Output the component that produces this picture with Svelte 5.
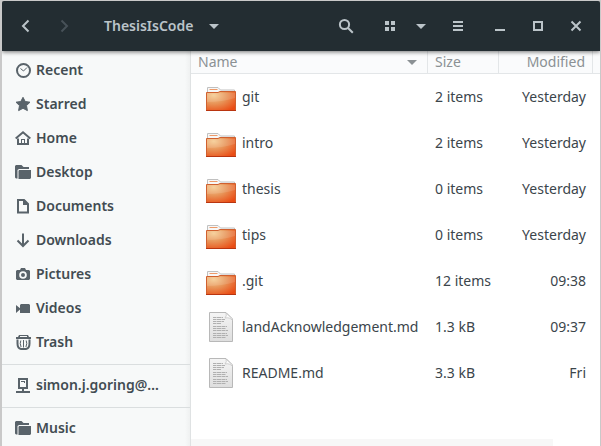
<script>
  const groups = [
    [
      ['Recent', 'recent'],
      ['Starred', 'star'],
      ['Home', 'home'],
      ['Desktop', 'folder'],
      ['Documents', 'document'],
      ['Downloads', 'download'],
      ['Pictures', 'camera'],
      ['Videos', 'video'],
      ['Trash', 'trash']
    ],
    [['simon.j.goring@…', 'server']],
    [['Music', 'folder']]
  ];

  const files = [
    { name: 'git', size: '2 items', modified: 'Yesterday', folder: true },
    { name: 'intro', size: '2 items', modified: 'Yesterday', folder: true },
    { name: 'thesis', size: '0 items', modified: 'Yesterday', folder: true },
    { name: 'tips', size: '0 items', modified: 'Yesterday', folder: true },
    { name: '.git', size: '12 items', modified: '09:38', folder: true },
    { name: 'landAcknowledgement.md', size: '1.3 kB', modified: '09:37', folder: false },
    { name: 'README.md', size: '3.3 kB', modified: 'Fri', folder: false }
  ];
</script>

{#snippet caret()}
  <svg class="caret" width="10" height="5" viewBox="0 0 10 5" aria-hidden="true"><path d="M0 0h10L5 5z" /></svg>
{/snippet}

{#snippet placeIcon(kind)}
  <svg class="place-icon" width="16" height="16" viewBox="0 0 16 16" aria-hidden="true">
    {#if kind === 'recent'}
      <circle class="line" cx="8.500" cy="8.500" r="6.500" />
      <path class="thin" d="M5.500 6.500l3 2.500L12 5.500" />
    {:else if kind === 'star'}
      <path d="M8 1.300l2.200 4.200 4.800.700-3.500 3.400.9 5L8 12.300l-4.400 2.300.9-5L1 6.200l4.800-.7z" stroke="currentColor" stroke-linejoin="round" stroke-width="1" />
    {:else if kind === 'home'}
      <path class="line" d="M.7 8.500L8 2.300l7.300 6.200" />
      <path d="M2 8.500h2V13h2V9h4v4h2V8.500h2V15H2z" />
      <path d="M7 10h2v3H7z" fill="#f7f9f9" />
    {:else if kind === 'folder'}
      <path d="M1 1h5.500l2 2H14v2H4L2.500 6v8.500H1l-1-1V2z" />
      <path d="M4 6h12v8l-1 1H3.500V7z" />
    {:else if kind === 'document'}
      <path class="line" d="M3 2h6l4 4v8.500H3z" />
      <path d="M8 2h2l3 4v1H8z" />
    {:else if kind === 'download'}
      <path class="line" d="M8 1.500V14M2.500 8.500L8 14l5.500-5.500" />
    {:else if kind === 'camera'}
      <path fill-rule="evenodd" d="M2 4h3l1-2h4l1 2h3l1 1v8l-1 1H2l-1-1V5zM8 5.200a3.800 3.800 0 1 0 0 7.600 3.800 3.800 0 0 0 0-7.600zM8 7a2 2 0 1 1 0 4 2 2 0 0 1 0-4z" />
    {:else if kind === 'video'}
      <path d="M6 4h8l1 1v8H5V9.500L1 13V5l4 3.200V5z" />
    {:else if kind === 'trash'}
      <path d="M4 1h9l1 2h2v2H1V3h2zM5 2v1h7V2z" fill-rule="evenodd" />
      <path class="line" d="M2.500 5.500v4q0 5 3.500 5.500h5q3.500-.5 3.500-5.500v-4" />
      <path class="thin" d="M5.800 6.500q-1.300 3 .3 6.500M8.500 6v7.500M11.200 6.500q1.300 3-.3 6.500" />
    {:else if kind === 'server'}
      <path class="line" d="M4 2h8v9H4z" />
      <path d="M6 4h4v1H6zM9 4h1v2H9zM7 11h2v3H7zM1 14h14v2H1z" />
    {/if}
  </svg>
{/snippet}

<div class="window">
  <header>
    <button class="tool" aria-label="Back">
      <svg width="16" height="16" viewBox="0 0 16 16"><path class="line" d="M10.500 2.500L5 8l5.500 5.500" /></svg>
    </button>
    <button class="tool" aria-label="Forward" disabled>
      <svg width="16" height="16" viewBox="0 0 16 16"><path class="line" d="M5.500 2.500L11 8l-5.500 5.500" /></svg>
    </button>
    <button class="path">ThesisIsCode {@render caret()}</button>
    <div class="tools">
      <button class="tool" aria-label="Search">
        <svg width="16" height="16" viewBox="0 0 16 16"><circle class="line" cx="6.500" cy="6.500" r="4.600" /><path class="line" d="M10 10l4.800 4.800" /></svg>
      </button>
      <div class="views">
        <button class="tool" aria-label="Grid view">
          <svg width="16" height="16" viewBox="0 0 16 16"><path d="M3 3h4v4H3zM9 3h4v4H9zM3 9h4v4H3zM9 9h4v4H9z" /></svg>
        </button>
        <button class="narrow" aria-label="View options">{@render caret()}</button>
      </div>
      <button class="tool" aria-label="Menu">
        <svg width="16" height="16" viewBox="0 0 16 16"><path d="M3 3h10v2H3zM3 7h10v2H3zM3 11h10v2H3z" /></svg>
      </button>
      <div class="controls">
        <button class="tool" aria-label="Minimize">
          <svg width="16" height="16" viewBox="0 0 16 16"><path d="M3 11h10v2H3z" /></svg>
        </button>
        <button class="tool" aria-label="Maximize">
          <svg width="16" height="16" viewBox="0 0 16 16"><path class="line" d="M4 4h8v8H4z" /></svg>
        </button>
        <button class="tool" aria-label="Close">
          <svg width="16" height="16" viewBox="0 0 16 16"><path class="line" d="M3.500 3.500l9 9M12.500 3.500l-9 9" /></svg>
        </button>
      </div>
    </div>
  </header>

  <div class="body">
    <nav aria-label="Places">
      {#each groups as group}
        <ul>
          {#each group as [label, icon]}
            <li><a href="#{icon}">{@render placeIcon(icon)}<span>{label}</span></a></li>
          {/each}
        </ul>
      {/each}
    </nav>

    <main>
      <table>
        <colgroup>
          <col />
          <col class="size-col" />
          <col class="modified-col" />
          <col class="end-col" />
        </colgroup>
        <thead>
          <tr>
            <th><div class="sort">Name {@render caret()}</div></th>
            <th>Size</th>
            <th class="right">Modified</th>
            <th class="end"></th>
          </tr>
        </thead>
        <tbody>
          {#each files as file}
            <tr>
              <td class="name">
                <div class="file">
                  {#if file.folder}
                    <svg width="30" height="32" viewBox="0 0 30 32" aria-hidden="true">
                      <path d="M1.500 12V6.500H12L14.500 9H28.500V12" fill="#f7f7f7" stroke="#c0c0c0" />
                      <path d="M3.500 8.500h8" stroke="#ee9a69" />
                      <path d="M.5 11.500h11.500l2-1h15.500v19H.5z" fill="url(#folder-fill)" stroke="#d0602f" />
                      <path d="M1 12h28v5Q16 21 1 21z" fill="#fff" opacity=".12" />
                      <path d="M0 29.500h30" stroke="#b93510" />
                    </svg>
                  {:else}
                    <svg width="30" height="32" viewBox="0 0 30 32" aria-hidden="true">
                      <path d="M3.500 1.500H20L26.500 8v22.500h-23z" fill="url(#page-fill)" stroke="#b8b8b8" />
                      <path d="M20 2q1 3-1 5 5-1 7.500 2.500V8z" fill="#fafafa" stroke="#bdbdbd" stroke-width=".7" />
                      <path d="M7 6.500h10M7 8.500h12M7 10.500h11M7 12.500h8M7 15.500h14M7 17.500h13M7 19.500h15M7 22.500h14M7 24.500h15M7 26.500h13" stroke="#b0b0b0" stroke-dasharray="3 .5 5 .5" />
                    </svg>
                  {/if}
                  <span>{file.name}</span>
                </div>
              </td>
              <td>{file.size}</td>
              <td class="right">{file.modified}</td>
              <td class="end"></td>
            </tr>
          {/each}
        </tbody>
      </table>
      <div class="status"></div>
    </main>
  </div>
</div>

<svg class="defs" width="0" height="0" aria-hidden="true">
  <defs>
    <radialGradient id="folder-fill" cx=".25" cy=".2" r=".95">
      <stop offset="0" stop-color="#f5cb91" />
      <stop offset=".45" stop-color="#e8965a" />
      <stop offset="1" stop-color="#ea4c14" />
    </radialGradient>
    <linearGradient id="page-fill" x2="0" y2="1">
      <stop offset="0" stop-color="#f5f5f5" />
      <stop offset="1" stop-color="#dedede" />
    </linearGradient>
  </defs>
</svg>

<style>
  :global(body) {
    background: #c9c9c9;
  }
  .window {
    box-sizing: border-box;
    height: 100vh;
    display: flex;
    flex-direction: column;
    border: solid #c9c9c9;
    border-width: 1px 1px 0 2px;
    font: 14px/20px "Noto Sans", "Open Sans", sans-serif;
    color: #3b454b;
    overflow: hidden;
  }
  header {
    position: relative;
    z-index: 1;
    flex: none;
    display: flex;
    align-items: center;
    height: 50px;
    padding: 0 5px;
    box-sizing: border-box;
    border-radius: 2px 2px 0 0;
    background: #232d32;
    color: #bbc4c9;
    box-shadow: 0 1px 4px rgba(0, 0, 0, 0.55);
  }
  button {
    display: flex;
    align-items: center;
    justify-content: center;
    height: 36px;
    padding: 0;
    border: 0;
    background: none;
    color: inherit;
    font: inherit;
  }
  button:disabled {
    color: #475158;
  }
  .tool {
    width: 38px;
  }
  .narrow {
    width: 24px;
  }
  .path {
    gap: 16px;
    margin-left: 21px;
    font-weight: 600;
  }
  .tools {
    display: flex;
    margin-left: auto;
  }
  .views {
    display: flex;
    margin: 0 6px;
  }
  .controls {
    display: flex;
    margin-left: 4px;
  }
  svg {
    flex: none;
    fill: currentColor;
  }
  .line {
    fill: none;
    stroke: currentColor;
    stroke-width: 2;
  }
  .thin {
    fill: none;
    stroke: currentColor;
    stroke-width: 1;
  }
  .body {
    flex: 1;
    display: flex;
    min-height: 0;
  }
  nav {
    flex: none;
    box-sizing: border-box;
    width: 189px;
    padding-top: 2px;
    border-right: 1px solid #dfe2e3;
    background: linear-gradient(to left, #eff1f1, #f7f9f9 5px);
    overflow: hidden;
  }
  ul {
    margin: 0;
    padding: 0;
    list-style: none;
  }
  ul + ul {
    margin-top: 5px;
    padding-top: 3px;
    border-top: 1px solid #dadedf;
  }
  a {
    display: flex;
    align-items: center;
    gap: 5px;
    height: 34px;
    padding-left: 13px;
    color: #424c52;
    font-weight: 600;
    text-decoration: none;
    white-space: nowrap;
  }
  .place-icon {
    color: #59636a;
  }
  main {
    flex: 1;
    min-width: 0;
    position: relative;
    background: #fff;
  }
  table {
    width: 100%;
    table-layout: fixed;
    border-spacing: 0;
  }
  .size-col {
    width: 71px;
  }
  .modified-col {
    width: 94px;
  }
  .end-col {
    width: 7px;
  }
  th {
    box-sizing: border-box;
    height: 23px;
    padding: 0 7px;
    border: solid #e3e6e8;
    border-width: 0 1px 1px 0;
    background: #fafbfc;
    color: #8b9194;
    font-weight: 400;
    text-align: left;
  }
  td {
    height: 46px;
    padding: 0 0 0 7px;
    white-space: nowrap;
  }
  .sort {
    display: flex;
    align-items: center;
    justify-content: space-between;
    padding-right: 3px;
  }
  .name {
    padding-left: 15px;
  }
  .file {
    display: flex;
    align-items: center;
    gap: 6px;
  }
  .right {
    text-align: right;
  }
  td.right {
    padding-right: 7px;
  }
  .end {
    padding: 0;
    border-right: 0;
  }
  .status {
    position: absolute;
    left: 0;
    bottom: 0;
    right: 47px;
    height: 7px;
    background: #f7f7f7;
  }
  .defs {
    position: absolute;
  }
</style>
